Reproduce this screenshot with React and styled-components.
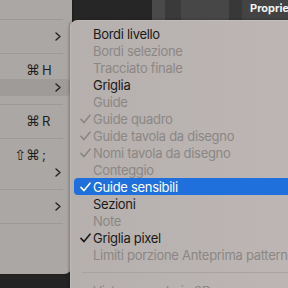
import styled, { createGlobalStyle } from "styled-components";

const GlobalStyle = createGlobalStyle`
  html, body {
    margin: 0;
    background: #252525;
    overflow: hidden;
  }
`;

const Screen = styled.div`
  position: relative;
  width: 288px;
  height: 288px;
  overflow: hidden;
  background: #242424;
  font-family: Inter, "Liberation Sans", sans-serif;
`;

const TopBar = styled.div`
  display: flex;
  height: 20px;
  padding-left: 73px;
`;

const BarSegment = styled.div`
  width: ${(props) => props.width || "auto"};
  flex: ${(props) => (props.grow ? 1 : "none")};
  background: ${(props) => props.color};
  color: #f2f2f2;
  font-size: 11px;
  font-weight: 700;
  padding-left: ${(props) => (props.grow ? 0 : "8px")};
  line-height: 16px;
  white-space: nowrap;
  overflow: hidden;
`;

const LeftMenu = styled.div`
  position: absolute;
  top: -6px;
  left: 0;
  width: 72px;
  height: 280px;
  background: #aba7a4;
  border-radius: 0 0 8px 0;
  box-shadow: 1px 0 2px rgba(0, 0, 0, 0.25);
`;

const LeftRow = styled.div`
  display: flex;
  align-items: center;
  justify-content: flex-end;
  height: 17px;
  margin-right: 2px;
  padding-right: 9px;
  border-radius: 0 4px 4px 0;
  background: ${(props) => (props.active ? "#9f9b98" : "transparent")};
  color: #1e1e1e;
  font-size: 13px;
`;

const Mods = styled.span`
  font-family: "DejaVu Sans", sans-serif;
  font-size: 14px;
  line-height: 17px;
`;

const Key = styled.span`
  width: 11px;
  margin-left: 2px;
  font-size: 13px;
  line-height: 17px;
`;

const ChevronBox = styled.span`
  display: flex;
  width: 8px;
  justify-content: flex-end;
`;

const LeftSeparator = styled.div`
  height: 17px;
  margin-right: 9px;
  display: flex;
  align-items: center;

  &::after {
    content: "";
    flex: 1;
    height: 1px;
    background: #9d9996;
  }
`;

const SubMenu = styled.div`
  position: absolute;
  top: 20px;
  left: 70px;
  width: 240px;
  height: 290px;
  padding-top: 5px;
  border-radius: 8px 0 0 0;
  background: linear-gradient(90deg, #b5b0ad 0%, #b9b3b1 50%, #beb6b4 100%);
  box-shadow: -1px 0 3px rgba(0, 0, 0, 0.3), inset 0 0 0 0.5px rgba(255, 255, 255, 0.25);
`;

const Item = styled.div`
  display: flex;
  align-items: center;
  height: 17px;
  margin: 0 0 0 4px;
  padding-left: 6px;
  border-radius: 4px;
  font-size: 13px;
  letter-spacing: -0.3px;
  white-space: nowrap;
  background: ${(props) => (props.selected ? "#1f6fdd" : "transparent")};
  color: ${(props) =>
    props.selected ? "#ffffff" : props.disabled ? "#8b8785" : "#1a1a1a"};
`;

const CheckBox = styled.span`
  display: flex;
  width: 13px;
`;

const SubSeparator = styled.div`
  height: 19px;
  margin-left: 12px;
  display: flex;
  align-items: center;

  &::after {
    content: "";
    flex: 1;
    height: 1px;
    background: #a8a3a1;
  }
`;

const Chevron = () => (
  <svg width="6" height="9" viewBox="0 0 6 9">
    <path d="M1 1 L5 4.5 L1 8" fill="none" stroke="#222" strokeWidth="1.4" strokeLinecap="round" strokeLinejoin="round" />
  </svg>
);

const Check = () => (
  <svg width="11" height="10" viewBox="0 0 11 10">
    <path d="M1 5.4 L4 8.6 L10 1.2" fill="none" stroke="currentColor" strokeWidth="1.6" strokeLinecap="round" strokeLinejoin="round" />
  </svg>
);

const leftRows = [
  { type: "row" },
  { type: "sep" },
  { type: "row", chevron: true },
  { type: "sep" },
  { type: "row", mods: "⌘", key: "H" },
  { type: "row", chevron: true, active: true },
  { type: "sep" },
  { type: "row", mods: "⌘", key: "R" },
  { type: "sep" },
  { type: "row", mods: "⇧⌘", key: ";" },
  { type: "row", chevron: true },
  { type: "sep" },
  { type: "row", chevron: true },
  { type: "sep" },
  { type: "row" },
  { type: "row" },
];

const items = [
  { label: "Bordi livello" },
  { label: "Bordi selezione", disabled: true },
  { label: "Tracciato finale", disabled: true },
  { label: "Griglia" },
  { label: "Guide", disabled: true },
  { label: "Guide quadro", disabled: true, checked: true },
  { label: "Guide tavola da disegno", disabled: true, checked: true },
  { label: "Nomi tavola da disegno", disabled: true, checked: true },
  { label: "Conteggio", disabled: true },
  { label: "Guide sensibili", checked: true, selected: true },
  { label: "Sezioni" },
  { label: "Note", disabled: true },
  { label: "Griglia pixel", checked: true },
  { label: "Limiti porzione Anteprima pattern", disabled: true },
  { sep: true },
  { label: "Vista secondaria 3D", disabled: true },
];

const App = () => {
  return (
    <Screen>
      <GlobalStyle />
      <TopBar>
        <BarSegment grow color="#262626" />
        <BarSegment width="5px" color="#4a4a4a" />
        <BarSegment width="8px" color="#3a3a3a" />
        <BarSegment width="40px" color="#474747" />
        <BarSegment width="5px" color="#383838" />
        <BarSegment width="38px" color="#434343">Proprietà</BarSegment>
      </TopBar>

      <LeftMenu>
        {leftRows.map((row, i) =>
          row.type === "sep" ? (
            <LeftSeparator key={i} />
          ) : (
            <LeftRow key={i} active={row.active}>
              {row.mods && <Mods>{row.mods}</Mods>}
              {row.key && <Key>{row.key}</Key>}
              <ChevronBox>{row.chevron && <Chevron />}</ChevronBox>
            </LeftRow>
          )
        )}
      </LeftMenu>

      <SubMenu>
        {items.map((item, i) =>
          item.sep ? (
            <SubSeparator key={i} />
          ) : (
            <Item key={i} disabled={item.disabled} selected={item.selected}>
              <CheckBox>{item.checked && <Check />}</CheckBox>
              {item.label}
            </Item>
          )
        )}
      </SubMenu>
    </Screen>
  );
};

export default App;
